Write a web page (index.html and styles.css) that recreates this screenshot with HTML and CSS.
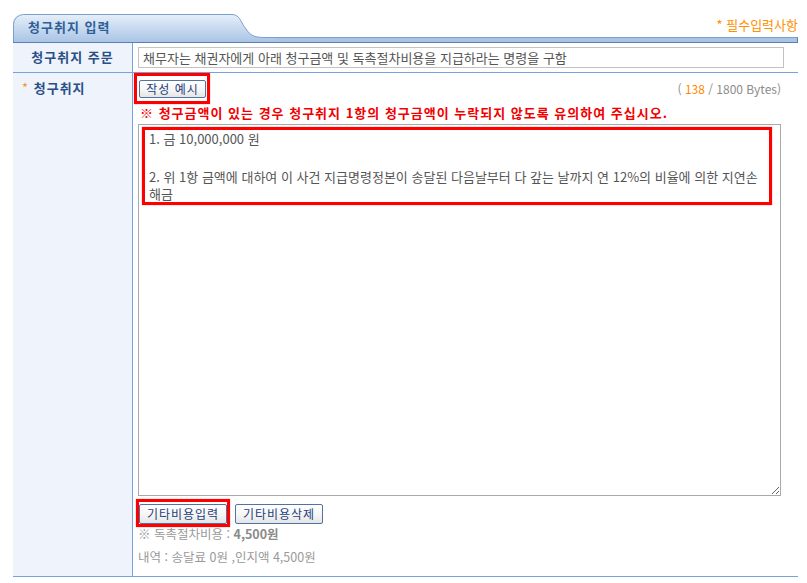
FILE: index.html
```html
<!DOCTYPE html>
<html lang="ko">
<head>
    <meta charset="UTF-8">
    <meta name="viewport" content="width=device-width, initial-scale=1.0">
    <title>청구취지 입력</title>
    <link rel="stylesheet" href="styles.css">
</head>
<body>
    <div class="wrap">
        <div class="head">
            <div class="tab">
                <svg class="tab-bg" width="262" height="29" viewBox="0 0 262 29">
                    <defs>
                        <linearGradient id="tabFill" x1="0" y1="0" x2="0" y2="1">
                            <stop offset="0" stop-color="#e6eff9"/>
                            <stop offset="1" stop-color="#a7c3e5"/>
                        </linearGradient>
                    </defs>
                    <path d="M0,29 V10 Q0,0.5 10,0.5 H219 C227,0.5 228,9 233,15 C237,21 241,23.5 251,23.5 H262 V29 Z" fill="url(#tabFill)"/>
                    <path d="M0.5,29 V10.5 A10,10 0 0 1 10.5,0.5 H219 C227,0.5 228,9 233,15 C237,21 241,23.5 251,23.5 H262" fill="none" stroke="#7b9fcd"/>
                    <path d="M0,28.5 H262" stroke="#5a80b3"/>
                </svg>
                <span class="tab-title">청구취지 입력</span>
            </div>
            <div class="head-right">
                <div class="req">* 필수입력사항</div>
                <div class="bar"></div>
            </div>
        </div>

        <div class="row row-order">
            <div class="label center">청구취지 주문</div>
            <div class="field">
                <input type="text" class="order" value="채무자는 채권자에게 아래 청구금액 및 독촉절차비용을 지급하라는 명령을 구함">
            </div>
        </div>

        <div class="row">
            <div class="label"><span class="star">*</span> 청구취지</div>
            <div class="field field-main">
                <div class="tool-row">
                    <span class="mark mark-top"><button class="btn btn-sample">작성 예시</button></span>
                    <span class="bytes">( <em>138</em> / 1800 Bytes)</span>
                </div>
                <p class="notice">※ 청구금액이 있는 경우 청구취지 1항의 청구금액이 누락되지 않도록 유의하여 주십시오.</p>
                <div class="claim-box">
                    <div class="claim-text" contenteditable="true">
                        <p class="claim-line first">1. 금 10,000,000 원</p>
                        <p class="claim-line">2. 위 1항 금액에 대하여 이 사건 지급명령정본이 송달된 다음날부터 다 갚는 날까지 연 12%의 비율에 의한 지연손해금</p>
                    </div>
                    <span class="mark-area"></span>
                </div>
                <div class="btn-row">
                    <span class="mark mark-bottom"><button class="btn">기타비용입력</button></span>
                    <button class="btn">기타비용삭제</button>
                </div>
                <p class="cost">※ 독촉절차비용 : <b>4,500원</b></p>
                <p class="detail">내역 : 송달료 0원 ,인지액 4,500원</p>
            </div>
        </div>
    </div>
</body>
</html>
```

FILE: styles.css
```css
body {
    margin: 0;
    font: 13px "Noto Sans CJK KR", "DejaVu Sans", sans-serif;
    color: #555;
    background: #fff;
}

.wrap {
    width: 785px;
    padding: 14px 0 0 13px;
}

/* header tab */
.head {
    display: flex;
    height: 29px;
}

.tab {
    position: relative;
    width: 262px;
    height: 29px;
    flex: none;
}

.tab-bg {
    position: absolute;
    left: 0;
    top: 0;
}

.tab-title {
    position: relative;
    display: block;
    padding: 5px 0 0 15px;
    line-height: 16px;
    font-weight: bold;
    letter-spacing: 1px;
    color: #2f5f98;
}

.head-right {
    flex: 1;
    display: flex;
    flex-direction: column;
    justify-content: flex-end;
}

.req {
    text-align: right;
    line-height: 14px;
    margin-bottom: 5px;
    color: #ff9000;
}

.bar {
    height: 6px;
    box-sizing: border-box;
    background: #a9c5e6;
    border-top: 1px solid #7b9fcd;
    border-bottom: 1px solid #5a80b3;
    border-right: 1px solid #5a80b3;
}

/* rows */
.row {
    display: flex;
    border-bottom: 1px solid #76a2de;
}

.label {
    width: 120px;
    flex: none;
    background: #eef3fc;
    border-right: 1px solid #76a2de;
    font-weight: bold;
    letter-spacing: 1px;
    color: #2a4f86;
    padding: 7px 0 0 9px;
    box-sizing: border-box;
    line-height: 16px;
}

.label.center {
    text-align: center;
    padding: 6px 0 0 0;
}

.star {
    color: #f39a1d;
    font-weight: normal;
}

.field {
    flex: 1;
    padding: 4px 13px 0 5px;
}

.row-order .field {
    height: 29px;
    box-sizing: border-box;
}

.order {
    width: 646px;
    height: 21px;
    box-sizing: border-box;
    border: 1px solid #c3c3c3;
    padding: 0 4px;
    font: 13px "Noto Sans CJK KR", "DejaVu Sans", sans-serif;
    color: #555;
    outline: none;
}

.field-main {
    padding: 0 15px 12px 5px;
}

.tool-row {
    display: flex;
    justify-content: space-between;
    align-items: center;
}

.mark {
    display: inline-block;
    border: 3px solid #f00;
    box-shadow: 0 0 1px #f66;
}

.mark-top {
    margin-left: -4px;
    padding: 4px 1px 3px 2px;
}

.mark-bottom {
    margin-left: -2px;
    padding: 2px 0 0 0;
}

.btn {
    display: block;
    height: 19px;
    padding: 0 6px;
    border: 1px solid #51739f;
    border-radius: 2px;
    background: linear-gradient(#fff, #f4f4f4 60%, #e4e4e4);
    font: 12px "Noto Sans CJK KR", "DejaVu Sans", sans-serif;
    letter-spacing: 1px;
    line-height: 16px;
    color: #1c3f7c;
}

.btn-sample {
    width: 67px;
    height: 18px;
    padding: 0;
}

.bytes {
    font-size: 12px;
    color: #8c8c8c;
    margin-right: 2px;
}

.bytes em {
    font-style: normal;
    color: #ff8a00;
}

.notice {
    margin: 0;
    padding: 2px 0 0 2px;
    line-height: 14px;
    font-weight: bold;
    letter-spacing: 1px;
    color: #f20000;
}

.claim-box {
    position: relative;
    width: 643px;
    margin-top: 4px;
}

.claim-text {
    height: 372px;
    box-sizing: border-box;
    border: 1px solid #a9a9a9;
    padding: 5px 17px 5px 10px;
    overflow: auto;
    resize: vertical;
    line-height: 17px;
    color: #555;
    outline: none;
}

.claim-line {
    margin: 0;
}

.claim-line.first {
    margin-bottom: 21px;
}

.mark-area {
    position: absolute;
    left: 4px;
    top: 3px;
    width: 630px;
    height: 78px;
    box-sizing: border-box;
    border: 3px solid #f00;
    box-shadow: 0 0 1px #f66;
    pointer-events: none;
}

.btn-row {
    display: flex;
    align-items: flex-end;
    gap: 5px;
    margin-top: 3px;
}

.btn-row .btn {
    width: 88px;
    padding: 0;
    height: 20px;
}

.btn-row > .btn {
    margin-bottom: 3px;
}

.cost {
    margin: 0;
    font-size: 12.5px;
    line-height: 14px;
    color: #9a9a9a;
}

.cost b {
    color: #8a8a8a;
}

.detail {
    margin: 9px 0 0 0;
    font-size: 12.5px;
    line-height: 14px;
    color: #9a9a9a;
}
```
